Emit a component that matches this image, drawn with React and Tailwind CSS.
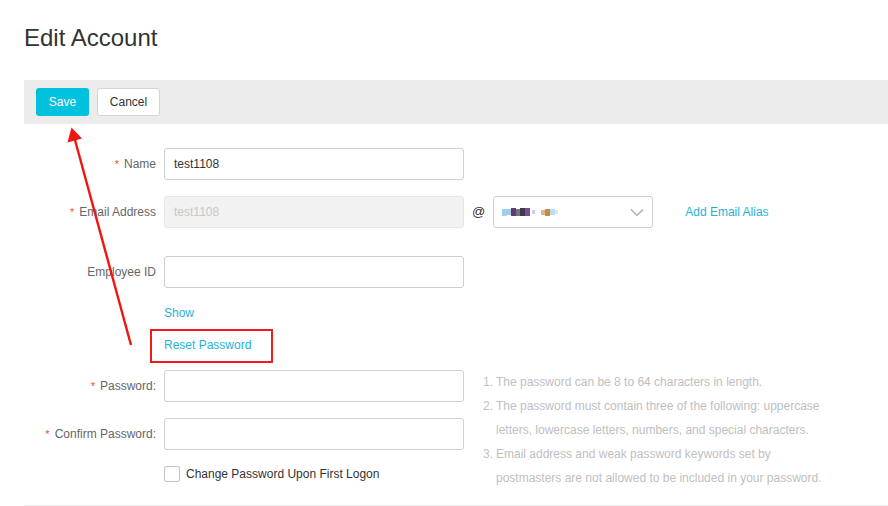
import React from 'react';

const font = { fontFamily: '"Liberation Sans", Arial, sans-serif' };

const Label = ({ required, children }) => (
    <div className="w-[132px] shrink-0 text-right text-[12px] text-[#666] pr-0">
        {required && <span className="text-[#f0532b] mr-[5px] text-[11px]">*</span>}
        {children}
    </div>
);

const TextInput = ({ value, disabled }) => (
    <div
        className={
            'w-[300px] h-8 rounded-[3px] border flex items-center px-[9px] text-[12px] ' +
            (disabled ? 'bg-[#f2f2f2] border-[#e6e6e6] text-[#c8c8c8]' : 'bg-white border-[#cfcfcf] text-[#333]')
        }
    >
        {value}
    </div>
);

const Row = ({ label, required, children, className = '' }) => (
    <div className={'flex items-center h-8 ' + className}>
        <Label required={required}>{label}</Label>
        <div className="ml-2 flex items-center">{children}</div>
    </div>
);

const hints = [
    ['1.', 'The password can be 8 to 64 characters in length.'],
    ['2.', 'The password must contain three of the following: uppercase letters, lowercase letters, numbers, and special characters.'],
    ['3.', 'Email address and weak password keywords set by postmasters are not allowed to be included in your password.'],
];

const App = () => {
    return (
        <div className="relative w-[888px] h-[506px] overflow-hidden bg-white pl-6" style={font}>
            <div className="h-20 pt-6">
                <h1 className="text-[24px] leading-[28px] text-[#333]">Edit Account</h1>
            </div>

            <div className="h-[44px] bg-[#ebeceb] flex items-center pl-3 gap-2">
                <button className="h-7 w-[53px] rounded-[3px] bg-[#00c1de] text-white text-[12px]">Save</button>
                <button className="h-7 w-[63px] rounded-[3px] bg-white border border-[#d5d5d5] text-[#333] text-[12px]">Cancel</button>
            </div>

            <div className="pt-6">
                <Row label="Name" required>
                    <TextInput value="test1108" />
                </Row>

                <Row label="Email Address" required className="mt-4">
                    <TextInput value="test1108" disabled />
                    <span className="ml-2 text-[13px] text-[#333]">@</span>
                    <div className="ml-2 w-[160px] h-8 rounded-[3px] border border-[#cfcfcf] flex items-center pl-[8px] pr-[8px]">
                        {/* blurred domain */}
                        <div className="flex items-center blur-[0.6px]">
                            <span className="w-[5px] h-[7px] bg-[#9fd0f0]" />
                            <span className="w-[4px] h-[6px] bg-[#a9c7e6]" />
                            <span className="w-[5px] h-[8px] bg-[#5b3f6e]" />
                            <span className="w-[4px] h-[7px] bg-[#7b6e86]" />
                            <span className="w-[5px] h-[8px] bg-[#3b3b4a]" />
                            <span className="w-[5px] h-[8px] bg-[#7d4a9a]" />
                            <span className="w-[3px] h-[4px] bg-[#cfcfd8] ml-[2px]" />
                            <span className="w-[4px] h-[5px] bg-[#d9b38c] ml-[6px]" />
                            <span className="w-[5px] h-[7px] bg-[#c98a45]" />
                            <span className="w-[5px] h-[6px] bg-[#b9dff5]" />
                            <span className="w-[3px] h-[4px] bg-[#dde6f0]" />
                        </div>
                        <svg className="ml-auto" width="14" height="9" viewBox="0 0 14 9">
                            <path d="M1 1.5 L7 7.5 L13 1.5" fill="none" stroke="#a8a8a8" strokeWidth="1.2" />
                        </svg>
                    </div>
                    <a className="ml-8 text-[12px] text-[#1fb3d8]">Add Email Alias</a>
                </Row>

                <Row label="Employee ID" className="mt-7">
                    <TextInput value="" />
                </Row>

                <div className="ml-[140px] mt-[13px] h-6 leading-6 text-[12px] text-[#1fb3d8]">Show</div>

                <div className="ml-[140px] mt-2 h-6 leading-6 text-[12px] text-[#1fb3d8] relative">
                    <span>Reset Password</span>
                    <span className="absolute left-[-14px] top-[-4px] w-[123px] h-[34px] border-2 border-[#ee1c1c]" />
                </div>

                <div className="flex mt-[13px]">
                    <div>
                        <Row label="Password:" required>
                            <TextInput value="" />
                        </Row>
                        <Row label="Confirm Password:" required className="mt-4">
                            <TextInput value="" />
                        </Row>
                        <div className="ml-[140px] mt-3 h-6 flex items-center">
                            <span className="w-4 h-4 rounded-[2px] border border-[#c4c4c4] bg-white" />
                            <span className="ml-[6px] text-[12px] text-[#333]">Change Password Upon First Logon</span>
                        </div>
                    </div>
                    <div className="ml-[19px] w-[345px] text-[12px] leading-6 text-[#c0c0c0]">
                        {hints.map(([n, t]) => (
                            <div key={n} className="flex">
                                <span className="w-[13px] shrink-0">{n}</span>
                                <span>{t}</span>
                            </div>
                        ))}
                    </div>
                </div>

                <div className="mt-[15px] h-[4px] bg-[#e9edf0]" />
            </div>

            <svg className="absolute left-0 top-0 pointer-events-none" width="888" height="506">
                <line x1="131" y1="345" x2="75" y2="140" stroke="#f21414" strokeWidth="2.4" />
                <polygon points="71.5,127.5 82,138.5 67.5,142.5" fill="#f21414" />
            </svg>
        </div>
    );
};

export default App;
